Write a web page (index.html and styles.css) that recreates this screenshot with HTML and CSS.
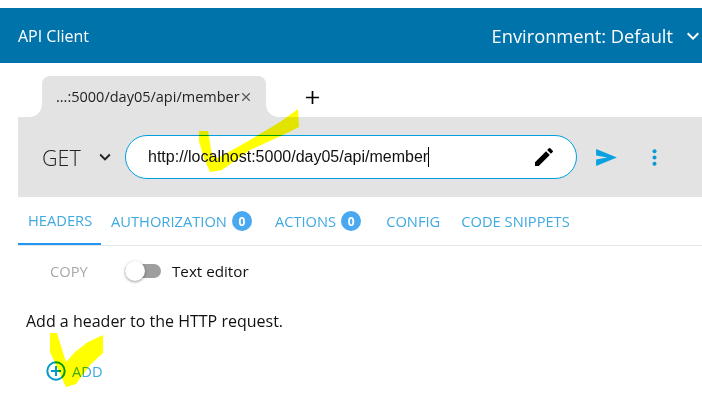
FILE: index.html
```html
<!DOCTYPE html>
<html lang="en">
<head>
<meta charset="utf-8">
<title>API Client</title>
<link rel="stylesheet" href="styles.css">
</head>
<body>
<header class="topbar">
  <span class="app-title">API Client</span>
  <div class="env">
    <span>Environment: Default</span>
    <svg class="env-chevron" viewBox="0 0 24 24"><path d="M7.41 8.59 12 13.17l4.59-4.58L18 10l-6 6-6-6z"/></svg>
  </div>
</header>

<div class="tabstrip">
  <div class="tab">
    <span class="tab-label">...:5000/day05/api/member</span>
    <svg class="tab-close" viewBox="0 0 12 12"><path d="M1.5 1.5l9 9M10.5 1.5l-9 9"/></svg>
  </div>
  <svg class="tab-add" viewBox="0 0 16 16"><path d="M8 1v14M1 8h14"/></svg>
</div>

<div class="requestbar">
  <div class="method">
    <span>GET</span>
    <svg class="method-chevron" viewBox="0 0 24 24"><path d="M7.41 8.59 12 13.17l4.59-4.58L18 10l-6 6-6-6z"/></svg>
  </div>
  <div class="urlbox">
    <span class="url">http://localhost:5000/day05/api/member</span><span class="caret"></span>
    <svg class="pencil" viewBox="0 0 24 24"><path d="M3 17.25V21h3.75L17.81 9.94l-3.75-3.75L3 17.25zM20.71 7.04a1 1 0 0 0 0-1.41l-2.34-2.34a1 1 0 0 0-1.41 0l-1.83 1.83 3.75 3.75 1.83-1.83z"/></svg>
  </div>
  <svg class="send" viewBox="0 0 22 18"><path d="M0 0l22 9L0 18l0-7 12-2L0 7z"/></svg>
  <svg class="more" viewBox="0 0 4 16"><circle cx="2" cy="2.2" r="1.9"/><circle cx="2" cy="8" r="1.9"/><circle cx="2" cy="13.8" r="1.9"/></svg>
</div>

<nav class="subtabs">
  <span class="subtab active">HEADERS</span>
  <span class="subtab snug">AUTHORIZATION<b class="badge">0</b></span>
  <span class="subtab">ACTIONS<b class="badge">0</b></span>
  <span class="subtab tight">CONFIG</span>
  <span class="subtab">CODE SNIPPETS</span>
</nav>

<div class="tools">
  <span class="copy">COPY</span>
  <span class="switch"><span class="knob"></span></span>
  <span class="switch-label">Text editor</span>
</div>

<p class="hint">Add a header to the HTTP request.</p>

<div class="add">
  <svg class="add-icon" viewBox="0 0 20 20"><circle cx="10" cy="10" r="8.7"/><path d="M10 5v10M5 10h10"/></svg>
  <span>ADD</span>
</div>

<svg class="scribble" viewBox="0 0 702 416" aria-hidden="true">
  <path d="M199 131L208 131L212 155L218 158L250 140L280 122L298 109L299 127L285 134L250 150L222 170L210 172L204 158L199 141Z"/>
  <path d="M50 333L57 333L66 362L75 352L88 342L103 335L103 353L90 365L76 384L66 387L61 376L50 352Z"/>
</svg>
</body>
</html>
```

FILE: styles.css
```css
* { box-sizing: border-box; }

html, body { margin: 0; height: 416px; overflow: hidden; background: #fff; }

body {
  position: relative;
  padding-top: 8px;
  font-family: "Open Sans", "Noto Sans", sans-serif;
  color: #222;
}

.topbar {
  height: 55px;
  background: #0073ab;
  color: #fff;
  display: flex;
  align-items: center;
  justify-content: space-between;
  padding: 0 5px 0 18px;
}

.app-title { font-size: 16px; }

.env { display: flex; align-items: center; gap: 8px; font-size: 18.3px; }

.env-chevron { width: 24px; height: 24px; fill: #fff; margin-right: -8px; }

.tabstrip {
  height: 54px;
  padding: 13px 0 0 42px;
  display: flex;
  align-items: flex-start;
}

.tab {
  position: relative;
  width: 224px;
  height: 41px;
  background: #e3e3e3;
  border-radius: 8px 8px 0 0;
  display: flex;
  align-items: center;
  padding: 0 0 0 14px;
  font-size: 14.5px;
  color: #222;
}

.tab::before, .tab::after {
  content: "";
  position: absolute;
  bottom: 0;
  width: 12px;
  height: 12px;
  background: radial-gradient(circle at var(--c) 0, #fff 11.5px, #e3e3e3 12px);
}
.tab::before { --c: 0; left: -12px; }
.tab::after { --c: 100%; right: -12px; }

.tab-label { white-space: nowrap; }

.tab-close { width: 10px; height: 10px; margin-left: 1px; fill: none; stroke: #555; stroke-width: 1.4; }

.tab-add { width: 15px; height: 15px; margin: 14px 0 0 39px; fill: none; stroke: #000; stroke-width: 1.8; }

.requestbar {
  height: 80px;
  margin-left: 18px;
  background: #e3e3e3;
  display: flex;
  align-items: center;
  padding-left: 24px;
}

.method { width: 83px; display: flex; align-items: center; font-size: 21.5px; font-weight: 300; color: #222; }

.method-chevron { width: 22px; height: 22px; margin-left: 13px; fill: #222; }

.urlbox {
  width: 452px;
  height: 44px;
  background: #fff;
  border: 1px solid #00a0e0;
  border-radius: 22px;
  display: flex;
  align-items: center;
  padding: 0 20px 0 22px;
}

.url { font-family: "Liberation Sans", Arial, sans-serif; font-size: 16px; color: #111; white-space: nowrap; }

.caret { width: 1px; height: 20px; background: #000; margin-right: auto; }

.pencil { width: 24px; height: 24px; fill: #000; }

.send { width: 21px; height: 17px; margin-left: 19px; fill: #0ba0e0; }

.more { width: 5px; height: 17px; margin-left: 35px; fill: #0b98d8; }

.subtabs {
  height: 49px;
  margin-left: 18px;
  border-bottom: 1px solid #e6e6e6;
  display: flex;
  align-items: center;
  font-size: 14.7px;
  color: #3fa9e0;
}

.subtab { height: 100%; display: flex; align-items: center; margin-right: 25px; white-space: nowrap; }
.subtab.snug { margin-right: 23px; }
.subtab.tight { margin-right: 21px; }

.subtab.active {
  width: 83px;
  margin-right: 10px;
  padding-left: 10px;
  border-bottom: 2px solid #2196f3;
}

.badge {
  width: 20px;
  height: 20px;
  margin-left: 5px;
  border-radius: 50%;
  background: #4aa8f0;
  color: #fff;
  font-size: 12px;
  font-weight: 700;
  display: flex;
  align-items: center;
  justify-content: center;
}

.tools { height: 50px; padding-left: 50px; display: flex; align-items: center; font-size: 14.7px; }

.copy { width: 75px; color: #a8a8a8; }

.switch { position: relative; width: 36px; height: 14px; border-radius: 7px; background: #9e9e9e; }

.knob {
  position: absolute;
  left: 0;
  top: -3px;
  width: 20px;
  height: 20px;
  border-radius: 50%;
  background: #fff;
  box-shadow: 0 1px 3px rgba(0, 0, 0, 0.4);
}

.switch-label { margin-left: 11px; font-size: 15.2px; color: #111; }

.hint { margin: 0; padding: 15px 0 0 26px; font-size: 16px; line-height: 20px; color: #111; }

.add { margin: 30px 0 0 46px; display: flex; align-items: center; gap: 6px; font-size: 14.7px; color: #3fa9e0; }

.add-icon { width: 20px; height: 20px; fill: none; stroke: #0098c8; stroke-width: 2; }

.scribble {
  position: absolute;
  left: 0;
  top: 0;
  width: 702px;
  height: 416px;
  pointer-events: none;
  mix-blend-mode: multiply;
  fill: #ffff00;
}
```
